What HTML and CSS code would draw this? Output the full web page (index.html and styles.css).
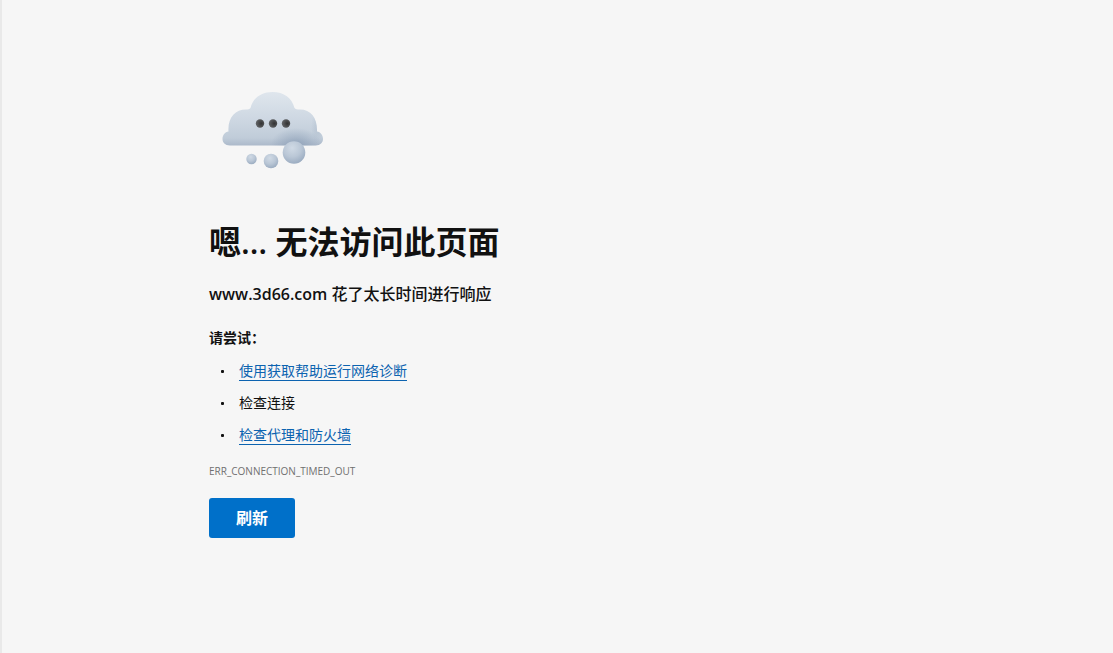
FILE: index.html
```html
<!DOCTYPE html>
<html lang="zh-CN">
<head>
    <meta charset="UTF-8">
    <meta name="viewport" content="width=device-width, initial-scale=1.0">
    <title>www.3d66.com</title>
    <link rel="stylesheet" href="styles.css">
</head>
<body>
    <main class="error-page">
        <svg class="cloud" width="128" height="128" viewBox="0 0 128 128" aria-hidden="true">
            <defs>
                <linearGradient id="cloud-fill" x1="0" y1="0" x2="0" y2="1">
                    <stop offset="0" stop-color="#dfe6ed"/>
                    <stop offset="0.55" stop-color="#ccd6e1"/>
                    <stop offset="0.85" stop-color="#c0ccd9"/>
                    <stop offset="1" stop-color="#aab8c9"/>
                </linearGradient>
                <radialGradient id="cloud-shade">
                    <stop offset="0" stop-color="#8296b0" stop-opacity="0.65"/>
                    <stop offset="1" stop-color="#8296b0" stop-opacity="0"/>
                </radialGradient>
                <radialGradient id="ball-fill" cx="0.42" cy="0.3" r="0.72">
                    <stop offset="0" stop-color="#d0dae5"/>
                    <stop offset="0.55" stop-color="#bac7d6"/>
                    <stop offset="1" stop-color="#9aabc0"/>
                </radialGradient>
                <radialGradient id="dot-fill" cx="0.65" cy="0.5" r="0.6">
                    <stop offset="0" stop-color="#333333"/>
                    <stop offset="1" stop-color="#606265"/>
                </radialGradient>
                <clipPath id="cloud-clip">
                    <path d="M21 80.500C16 80.500 13.500 77.500 13.500 74C13.500 70 16 67 19.500 66.500C18.500 53 26 44.500 37 44.500C39 44.500 40.500 44.500 41.500 43C44 33 52 27 63.500 27C75 27 83 33 85.500 43C86.500 44.500 88 44.500 91 44.500C102 44.500 108.500 53 108 66.500C111.500 67 114 70 114 74C114 77.500 111.500 80.500 106.500 80.500Z"/>
                </clipPath>
            </defs>
            <g clip-path="url(#cloud-clip)">
                <rect x="13" y="27" width="102" height="54" fill="url(#cloud-fill)"/>
                <ellipse cx="87" cy="79" rx="25" ry="16" fill="url(#cloud-shade)"/>
                <ellipse cx="108" cy="62" rx="6" ry="16" fill="url(#cloud-shade)" opacity="0.3"/>
            </g>
            <g fill="url(#dot-fill)">
                <circle cx="51" cy="58.500" r="4.200"/>
                <circle cx="64" cy="58.500" r="4.200"/>
                <circle cx="77" cy="58.500" r="4.200"/>
            </g>
            <g fill="url(#ball-fill)">
                <circle cx="42.500" cy="94" r="5.200"/>
                <circle cx="62" cy="96" r="7.300"/>
                <circle cx="85" cy="87.500" r="11.300"/>
            </g>
        </svg>
        <h1>嗯… 无法访问此页面</h1>
        <p class="summary"><strong>www.3d66.com</strong> 花了太长时间进行响应</p>
        <h2>请尝试：</h2>
        <ul class="suggestions">
            <li><a href="#">使用获取帮助运行网络诊断</a></li>
            <li>检查连接</li>
            <li><a href="#">检查代理和防火墙</a></li>
        </ul>
        <p class="error-code">ERR_CONNECTION_TIMED_OUT</p>
        <button class="reload" type="button">刷新</button>
    </main>
</body>
</html>
```
FILE: styles.css
```css
* {
    box-sizing: border-box;
}
body {
    margin: 0;
    min-height: 100vh;
    padding: 0 24px;
    background-color: #f6f6f6;
    border-left: 2px solid #e9e9e9;
    font-family: "Open Sans", "Noto Sans CJK SC", sans-serif;
    font-size: 14px;
    color: #111111;
}
.error-page {
    max-width: 697px;
    margin: 0 auto;
    padding-top: 65px;
}
.cloud {
    display: block;
}
h1 {
    margin: 29px 0 0;
    font-size: 32px;
    line-height: 40px;
    font-weight: 600;
}
.summary {
    margin: 20px 0 0;
    font-size: 16px;
    line-height: 24px;
    font-weight: 500;
}
.summary strong {
    font-weight: 600;
}
h2 {
    margin: 20px 0 0;
    font-size: 14px;
    line-height: 24px;
    font-weight: 700;
}
.suggestions {
    display: flex;
    flex-direction: column;
    gap: 8px;
    margin: 9px 0 0;
    padding-left: 12px;
    line-height: 24px;
    list-style: none;
}
.suggestions li {
    display: flex;
    align-items: center;
    gap: 15px;
    min-height: 24px;
}
.suggestions li::before {
    content: "";
    width: 3px;
    height: 3px;
    border-radius: 1px;
    background-color: #111111;
}
.suggestions a {
    line-height: 19px;
    color: #0c63b0;
    text-decoration: none;
    border-bottom: 1px solid #0c63b0;
}
.error-code {
    margin: 16px 0 0;
    font-size: 10px;
    line-height: 16px;
    color: #707070;
}
.reload {
    display: block;
    margin-top: 19px;
    padding: 8px 27px;
    border: none;
    border-radius: 3px;
    background-color: #0070c9;
    color: #ffffff;
    font-family: inherit;
    font-size: 16px;
    line-height: 24px;
    font-weight: 700;
    cursor: pointer;
}
.reload:hover {
    background-color: #005fab;
}
```
